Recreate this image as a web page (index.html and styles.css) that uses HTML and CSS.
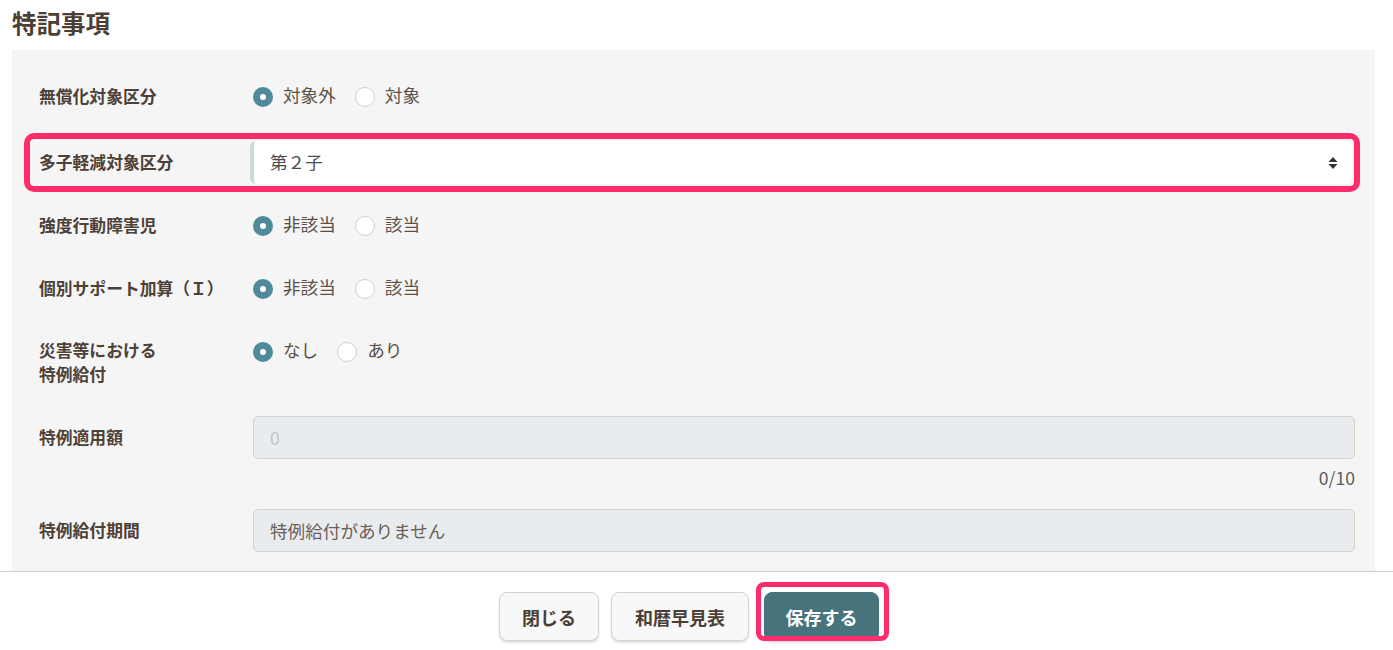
FILE: index.html
```html
<!DOCTYPE html>
<html lang="ja">
<head>
<meta charset="utf-8">
<title>特記事項</title>
<link rel="stylesheet" href="styles.css">
</head>
<body>
<div class="page">
  <h2 class="title">特記事項</h2>
  <div class="panel">
    <div class="row r1">
      <div class="label">無償化対象区分</div>
      <div class="field radios">
        <span class="radio on"></span><span class="rtext">対象外</span>
        <span class="radio"></span><span class="rtext">対象</span>
      </div>
    </div>
    <div class="row r2">
      <div class="label">多子軽減対象区分</div>
      <div class="field">
        <div class="select">
          <span>第２子</span>
          <svg class="arrows" width="10" height="14" viewBox="0 0 10 14"><path d="M5 1 L9.5 6 H0.5 Z M5 13 L9.5 8 H0.5 Z" fill="#333"/></svg>
        </div>
      </div>
      <div class="mark"></div>
    </div>
    <div class="row r3">
      <div class="label">強度行動障害児</div>
      <div class="field radios">
        <span class="radio on"></span><span class="rtext">非該当</span>
        <span class="radio"></span><span class="rtext">該当</span>
      </div>
    </div>
    <div class="row r4">
      <div class="label">個別サポート加算（Ｉ）</div>
      <div class="field radios">
        <span class="radio on"></span><span class="rtext">非該当</span>
        <span class="radio"></span><span class="rtext">該当</span>
      </div>
    </div>
    <div class="row r5">
      <div class="label two">災害等における<br>特例給付</div>
      <div class="field radios">
        <span class="radio on"></span><span class="rtext">なし</span>
        <span class="radio"></span><span class="rtext">あり</span>
      </div>
    </div>
    <div class="row r6">
      <div class="label">特例適用額</div>
      <div class="field col">
        <div class="input disabled placeholder">0</div>
        <div class="counter">0/10</div>
      </div>
    </div>
    <div class="row r7">
      <div class="label">特例給付期間</div>
      <div class="field">
        <div class="input disabled">特例給付がありません</div>
      </div>
    </div>
  </div>
  <div class="footer">
    <button class="btn w1">閉じる</button>
    <button class="btn w2">和暦早見表</button>
    <button class="btn primary">保存する<span class="bmark"></span></button>
  </div>
</div>
</body>
</html>
```
FILE: styles.css
```css
html, body {
  margin: 0;
  padding: 0;
  background: #fff;
  font-family: "Noto Sans CJK JP", "Noto Sans", sans-serif;
  color: #4d4038;
}
.page {
  width: 1393px;
  height: 650px;
  overflow: hidden;
}
.title {
  margin: 0 0 12px 12px;
  padding-top: 8px;
  font-size: 24.5px;
  line-height: 30px;
  font-weight: 700;
  color: #4a3e35;
}
.panel {
  margin: 0 18px 0 12px;
  background: #f5f5f5;
  padding: 25px 20px 19px 27px;
  display: flex;
  flex-direction: column;
}
.row {
  display: flex;
  align-items: flex-start;
  position: relative;
  margin-bottom: 20px;
}
.r2 { margin-top: 3px; }
.r5 { min-height: 66px; }
.r7 { margin-bottom: 0; }
.label {
  width: 214px;
  flex: none;
  font-size: 16.8px;
  font-weight: 700;
  line-height: 20px;
  padding-top: 11px;
  color: #4d4037;
}
.label.two {
  line-height: 24px;
  padding-top: 8px;
}
.field {
  flex: 1;
  min-width: 0;
}
.field.col {
  display: flex;
  flex-direction: column;
}
.radios {
  height: 43px;
  display: flex;
  align-items: center;
}
.radio {
  width: 20px;
  height: 20px;
  box-sizing: border-box;
  border-radius: 50%;
  background: #fff;
  border: 1px solid #d3cec9;
  flex: none;
}
.radio.on {
  border: 7px solid #4f8a9a;
}
.rtext {
  margin-left: 10px;
  margin-right: 19px;
  font-size: 17.6px;
  line-height: 24px;
  color: #5b4f47;
  position: relative;
  top: -2px;
}
.select {
  margin-left: -3px;
  margin-right: 3px;
  height: 43px;
  box-sizing: border-box;
  background: #fff;
  border-radius: 6px;
  border-left: 4px solid #cbd9dd;
  display: flex;
  align-items: center;
  justify-content: space-between;
  padding: 0 14px 0 16px;
  font-size: 17.6px;
  color: #4b4b4b;
}
.select span {
  position: relative;
  top: -1px;
}
.arrows {
  display: block;
}
.mark {
  position: absolute;
  top: -8px;
  left: -15px;
  right: -5px;
  bottom: -8px;
  border: 6px solid #fe2c6a;
  border-radius: 10px;
}
.input {
  height: 43px;
  box-sizing: border-box;
  border: 1px solid #d8d2cc;
  border-radius: 5px;
  background: #e9ecef;
  padding: 0 16px;
  display: flex;
  align-items: center;
  font-size: 17.6px;
  color: #6b6058;
}
.input.placeholder {
  color: #c3c3c3;
}
.counter {
  margin-top: 8px;
  text-align: right;
  font-size: 17.6px;
  line-height: 22px;
  color: #5c5c5c;
}
.footer {
  border-top: 1px solid #d4cdc6;
  display: flex;
  justify-content: center;
  gap: 12px;
  padding: 20px 15px 0 0;
}
.btn {
  position: relative;
  height: 49px;
  box-sizing: border-box;
  border: 1px solid #d6d0ca;
  border-radius: 8px;
  background: #f8f8f8;
  box-shadow: 0 2px 2px rgba(0, 0, 0, 0.12);
  font-family: inherit;
  font-size: 18px;
  font-weight: 700;
  color: #4a3e35;
  padding: 0;
}
.w1 { width: 100px; }
.w2 { width: 138px; }
.primary {
  width: 115px;
  margin-left: 3px;
  background: #47737c;
  border-color: #47737c;
  color: #fff;
}
.bmark {
  position: absolute;
  top: -11px;
  left: -9px;
  right: -11px;
  bottom: -1px;
  border: 5px solid #fe2c6a;
  border-radius: 8px;
}
```
